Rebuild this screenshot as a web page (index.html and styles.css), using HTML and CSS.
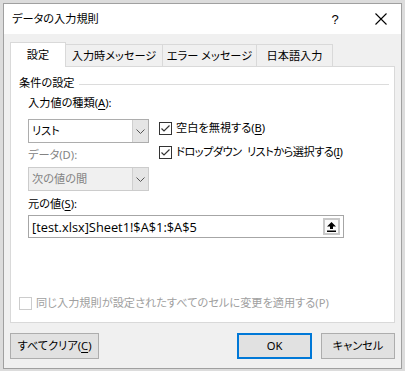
FILE: index.html
```html
<!DOCTYPE html>
<html lang="ja">
<head>
<meta charset="utf-8">
<link rel="stylesheet" href="styles.css">
</head>
<body>
<div class="win">
  <div class="titlebar">
    <span class="title">データの入力規則</span>
    <span class="help">?</span>
    <span class="close"><svg width="12" height="12" viewBox="0 0 12 12"><path d="M0.5 0.5 L11.5 11.5 M11.5 0.5 L0.5 11.5" stroke="#000" stroke-width="1.1" fill="none"/></svg></span>
  </div>
  <div class="content">
    <div class="tabs">
      <div class="tab active">設定</div>
      <div class="tab t2">入力時メッセージ</div>
      <div class="tab t3">エラー メッセージ</div>
      <div class="tab t4">日本語入力</div>
    </div>
    <div class="panel">
      <div class="group-head"><span class="group-title">条件の設定</span><span class="rule"></span></div>
      <div class="group-body">
        <div class="label first">入力値の種類(<u>A</u>):</div>
        <div class="row">
          <div class="leftcol">
            <div class="combo"><span class="cval">リスト</span><span class="cbtn"><svg width="9" height="5" viewBox="0 0 9 5"><path d="M0.5 0.5 L4.5 4.5 L8.5 0.5" stroke="#555" stroke-width="1" fill="none"/></svg></span></div>
            <div class="label dis">データ(D):</div>
            <div class="combo disabled"><span class="cval">次の値の間</span><span class="cbtn"><svg width="9" height="5" viewBox="0 0 9 5"><path d="M0.5 0.5 L4.5 4.5 L8.5 0.5" stroke="#555" stroke-width="1" fill="none"/></svg></span></div>
          </div>
          <div class="checks">
            <div class="check"><span class="box"><svg width="11" height="11" viewBox="0 0 11 11"><path d="M1.5 5.5 L4 8 L9.5 2.5" stroke="#333" stroke-width="1.2" fill="none"/></svg></span><span>空白を無視する(<u>B</u>)</span></div>
            <div class="check"><span class="box"><svg width="11" height="11" viewBox="0 0 11 11"><path d="M1.5 5.5 L4 8 L9.5 2.5" stroke="#333" stroke-width="1.2" fill="none"/></svg></span><span class="tight">ドロップダウン リストから選択する(<u>I</u>)</span></div>
          </div>
        </div>
        <div class="label src">元の値(<u>S</u>):</div>
        <div class="input">
          <span class="val">[test.xlsx]Sheet1!$A$1:$A$5</span>
          <span class="refbtn"><svg width="9" height="10" viewBox="0 0 9 10"><path d="M4.5 0 L9 4.5 L6 4.5 L6 7 L3 7 L3 4.5 L0 4.5 Z" fill="#000"/><rect x="0" y="8.5" width="9" height="1.5" fill="#000"/></svg></span>
        </div>
      </div>
      <div class="check disabled bottom"><span class="box"></span><span>同じ入力規則が設定されたすべてのセルに変更を適用する(P)</span></div>
    </div>
    <div class="buttons">
      <button class="btn clear">すべてクリア(<u>C</u>)</button>
      <span class="spacer"></span>
      <button class="btn ok">OK</button>
      <button class="btn cancel">キャンセル</button>
    </div>
  </div>
</div>
</body>
</html>
```
FILE: styles.css
```css
* { box-sizing: border-box; }
html, body { margin: 0; padding: 0; }
body {
  width: 405px;
  height: 371px;
  background: #dcdcdc;
  padding: 3px 0 0 3px;
  font-family: "Noto Sans", "Noto Sans CJK JP", sans-serif;
  font-size: 11.2px;
  font-feature-settings: "palt";
  color: #000;
  overflow: hidden;
}
u { text-decoration: underline; text-underline-offset: 2px; }
.win {
  width: 399px;
  height: 366px;
  border: 1px solid #a0a0a0;
  background: #f0f0f0;
  display: flex;
  flex-direction: column;
}
.titlebar {
  height: 30px;
  background: #fff;
  display: flex;
  align-items: center;
  padding-left: 8px;
}
.title { flex: 1; line-height: 16px; }
.help { width: 14px; margin-right: 33px; font-family: "Liberation Sans", sans-serif; font-size: 13px; text-align: center; }
.close { width: 12px; height: 12px; margin-right: 14px; display: flex; }
.content {
  flex: 1;
  padding: 8px 6px 0 6px;
  display: flex;
  flex-direction: column;
}
.tabs {
  display: flex;
  align-items: flex-end;
  height: 24px;
  position: relative;
  z-index: 1;
}
.tab {
  height: 22px;
  border: 1px solid #d9d9d9;
  border-bottom: none;
  border-left: none;
  background: #f0f0f0;
  display: flex;
  align-items: center;
  justify-content: center;
  line-height: 16px;
}
.tab.active {
  height: 25px;
  margin-bottom: -1px;
  width: 56px;
  background: #fff;
  border-left: 1px solid #d9d9d9;
  padding-bottom: 1px;
}
.t2 { width: 97px; }
.t3 { width: 94px; }
.t4 { width: 76px; }
.panel {
  height: 257px;
  background: #fff;
  border: 1px solid #d9d9d9;
  padding: 8px 5px 11px 8px;
  display: flex;
  flex-direction: column;
}
.group-head { display: flex; align-items: center; height: 16px; }
.group-title { line-height: 16px; }
.rule { flex: 1; height: 1px; background: #dcdcdc; margin: 2px 0 0 4px; }
.group-body { padding-left: 9px; display: flex; flex-direction: column; }
.label { line-height: 16px; height: 16px; }
.label.first { margin-top: 4px; }
.label.dis { color: #838383; margin-top: 4px; }
.label.src { margin-top: 5px; }
.row { display: flex; margin-top: 8px; }
.leftcol { width: 121px; display: flex; flex-direction: column; }
.combo {
  height: 24px;
  border: 1px solid #adadad;
  background: #fff;
  display: flex;
  align-items: stretch;
}
.combo.disabled { margin-top: 4px; background: #f0f0f0; border-color: #cccccc; color: #838383; }
.cval { flex: 1; padding-left: 3px; display: flex; align-items: center; line-height: 16px; }
.cbtn {
  width: 16px;
  background: #e5e5e5;
  border-left: 1px solid #cfcfcf;
  display: flex;
  align-items: center;
  justify-content: center;
}
.checks { display: flex; flex-direction: column; gap: 8px; padding-top: 1px; margin-left: 10px; }
.check { display: flex; align-items: center; height: 16px; line-height: 16px; white-space: nowrap; }
.tight { letter-spacing: -0.5px; word-spacing: 3px; }
.box {
  width: 13px;
  height: 13px;
  border: 1px solid #333;
  background: #fff;
  margin-right: 4px;
  display: flex;
  align-items: center;
  justify-content: center;
}
.check.disabled { color: #a0a0a0; }
.check.disabled .box { border-color: #cccccc; }
.bottom { margin-top: auto; }
.input {
  margin-top: 3px;
  width: 316px;
  height: 23px;
  border: 1px solid #a6a6a6;
  background: #fff;
  display: flex;
  align-items: center;
  padding: 0 3px 0 3px;
}
.val { flex: 1; line-height: 16px; font-family: "Open Sans", "Noto Sans", sans-serif; font-size: 12.8px; }
.refbtn {
  width: 17px;
  height: 17px;
  border: 2px solid #c8c8c8;
  background: #fbfbfb;
  display: flex;
  align-items: center;
  justify-content: center;
}
.buttons { display: flex; margin-top: 10px; height: 26px; }
.spacer { flex: 1; }
.btn {
  font: inherit;
  font-feature-settings: "palt";
  height: 26px;
  border: 1px solid #adadad;
  background: #e1e1e1;
  color: #000;
  padding: 0;
  line-height: 16px;
}
.clear { width: 89px; }
.ok { width: 75px; border: 2px solid #0078d7; margin-right: 9px; }
.cancel { width: 74px; }
```
